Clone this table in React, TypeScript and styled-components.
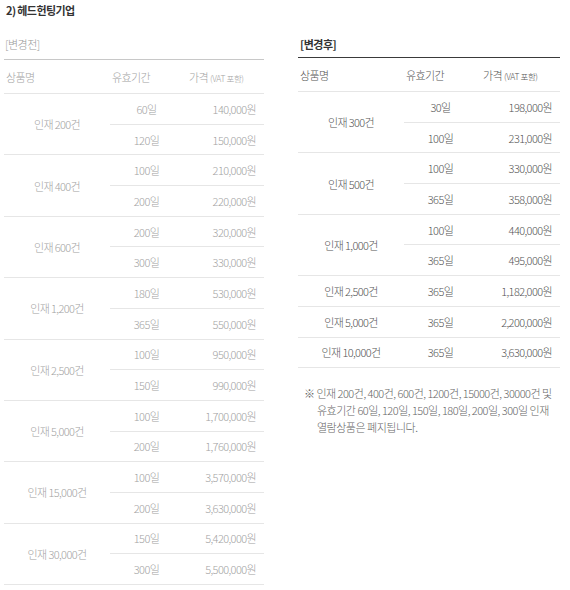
import React from "react";
import styled, { createGlobalStyle } from "styled-components";

interface Plan {
  name: string;
  options: { period: string; price: string }[];
}

const before: Plan[] = [
  { name: "인재 200건", options: [{ period: "60일", price: "140,000원" }, { period: "120일", price: "150,000원" }] },
  { name: "인재 400건", options: [{ period: "100일", price: "210,000원" }, { period: "200일", price: "220,000원" }] },
  { name: "인재 600건", options: [{ period: "200일", price: "320,000원" }, { period: "300일", price: "330,000원" }] },
  { name: "인재 1,200건", options: [{ period: "180일", price: "530,000원" }, { period: "365일", price: "550,000원" }] },
  { name: "인재 2,500건", options: [{ period: "100일", price: "950,000원" }, { period: "150일", price: "990,000원" }] },
  { name: "인재 5,000건", options: [{ period: "100일", price: "1,700,000원" }, { period: "200일", price: "1,760,000원" }] },
  { name: "인재 15,000건", options: [{ period: "100일", price: "3,570,000원" }, { period: "200일", price: "3,630,000원" }] },
  { name: "인재 30,000건", options: [{ period: "150일", price: "5,420,000원" }, { period: "300일", price: "5,500,000원" }] },
];

const after: Plan[] = [
  { name: "인재 300건", options: [{ period: "30일", price: "198,000원" }, { period: "100일", price: "231,000원" }] },
  { name: "인재 500건", options: [{ period: "100일", price: "330,000원" }, { period: "365일", price: "358,000원" }] },
  { name: "인재 1,000건", options: [{ period: "100일", price: "440,000원" }, { period: "365일", price: "495,000원" }] },
  { name: "인재 2,500건", options: [{ period: "365일", price: "1,182,000원" }] },
  { name: "인재 5,000건", options: [{ period: "365일", price: "2,200,000원" }] },
  { name: "인재 10,000건", options: [{ period: "365일", price: "3,630,000원" }] },
];

function PriceTable({ plans, faded }: { plans: Plan[]; faded?: boolean }) {
  return (
    <Table $faded={faded}>
      <colgroup>
        <col style={{ width: 106 }} />
        <col style={{ width: 77 }} />
        <col />
      </colgroup>
      <thead>
        <tr>
          <Th>상품명</Th>
          <Th>유효기간</Th>
          <Th>
            가격 <Small>(VAT 포함)</Small>
          </Th>
        </tr>
      </thead>
      <tbody>
        {plans.map((plan) =>
          plan.options.map((opt, i) => (
            <Row key={plan.name + opt.period}>
              {i === 0 && <NameCell rowSpan={plan.options.length}>{plan.name}</NameCell>}
              <PeriodCell>{opt.period}</PeriodCell>
              <PriceCell>{opt.price}</PriceCell>
            </Row>
          ))
        )}
      </tbody>
    </Table>
  );
}

export default function App() {
  return (
    <>
      <GlobalStyle />
      <Page>
        <Title>2) 헤드헌팅기업</Title>
        <Columns>
          <Column>
            <Label>[변경전]</Label>
            <PriceTable plans={before} faded />
          </Column>
          <Column>
            <Label $strong>[변경후]</Label>
            <PriceTable plans={after} />
            <Note>
              ※ 인재 200건, 400건, 600건, 1200건, 15000건, 30000건 및 유효기간 60일, 120일, 150일, 180일,
              200일, 300일 인재 열람상품은 폐지됩니다.
            </Note>
          </Column>
        </Columns>
      </Page>
    </>
  );
}

const GlobalStyle = createGlobalStyle`
  body {
    margin: 0;
    background: #fff;
    font-family: "Noto Sans CJK KR", "Noto Sans", sans-serif;
  }
`;

const Page = styled.div`
  width: 570px;
  padding: 3px 0 0 4px;
  box-sizing: border-box;
`;

const Title = styled.div`
  margin-left: 2px;
  font-size: 11px;
  line-height: 14px;
  font-weight: 700;
  color: #333;
  letter-spacing: -0.6px;
`;

const Columns = styled.div`
  display: grid;
  grid-template-columns: 260px 262px;
  column-gap: 34px;
  margin-top: 19px;
  align-items: start;
`;

const Column = styled.div`
  display: flex;
  flex-direction: column;
`;

const Label = styled.div<{ $strong?: boolean }>`
  font-size: 11px;
  line-height: 16px;
  letter-spacing: -0.5px;
  padding-left: ${(p) => (p.$strong ? "2px" : "1px")};
  font-weight: ${(p) => (p.$strong ? 700 : 300)};
  color: ${(p) => (p.$strong ? "#333" : "#999")};
  margin-bottom: ${(p) => (p.$strong ? "5px" : "7px")};
`;

const Table = styled.table<{ $faded?: boolean }>`
  width: 100%;
  border-collapse: collapse;
  table-layout: fixed;
  font-size: 11px;
  font-weight: 300;
  letter-spacing: -0.6px;
  color: ${(p) => (p.$faded ? "#a3a3a3" : "#555")};
  border-top: 1px solid ${(p) => (p.$faded ? "#c8c8c8" : "#3a3a3a")};
`;

const Th = styled.th`
  height: 33px;
  padding: 0 0 0 2px;
  text-align: left;
  font-weight: 300;
  border-bottom: 1px solid #e6e6e6;
`;

const Small = styled.span`
  font-size: 8.5px;
  letter-spacing: -0.4px;
`;

const Row = styled.tr`
  height: 30.7px;
`;

const NameCell = styled.td`
  padding: 0;
  text-align: center;
  border-bottom: 1px solid #e6e6e6;
`;

const PeriodCell = styled.td`
  padding: 0 4px 0 0;
  text-align: center;
  border-bottom: 1px solid #e6e6e6;
`;

const PriceCell = styled.td`
  padding: 0 8px 0 0;
  text-align: right;
  border-bottom: 1px solid #e6e6e6;
`;

const Note = styled.p`
  margin: 17px 0 0;
  padding-left: 19px;
  padding-right: 4px;
  text-indent: -13px;
  font-size: 11px;
  font-weight: 300;
  line-height: 17px;
  letter-spacing: -0.5px;
  color: #666;
  word-break: keep-all;
`;
